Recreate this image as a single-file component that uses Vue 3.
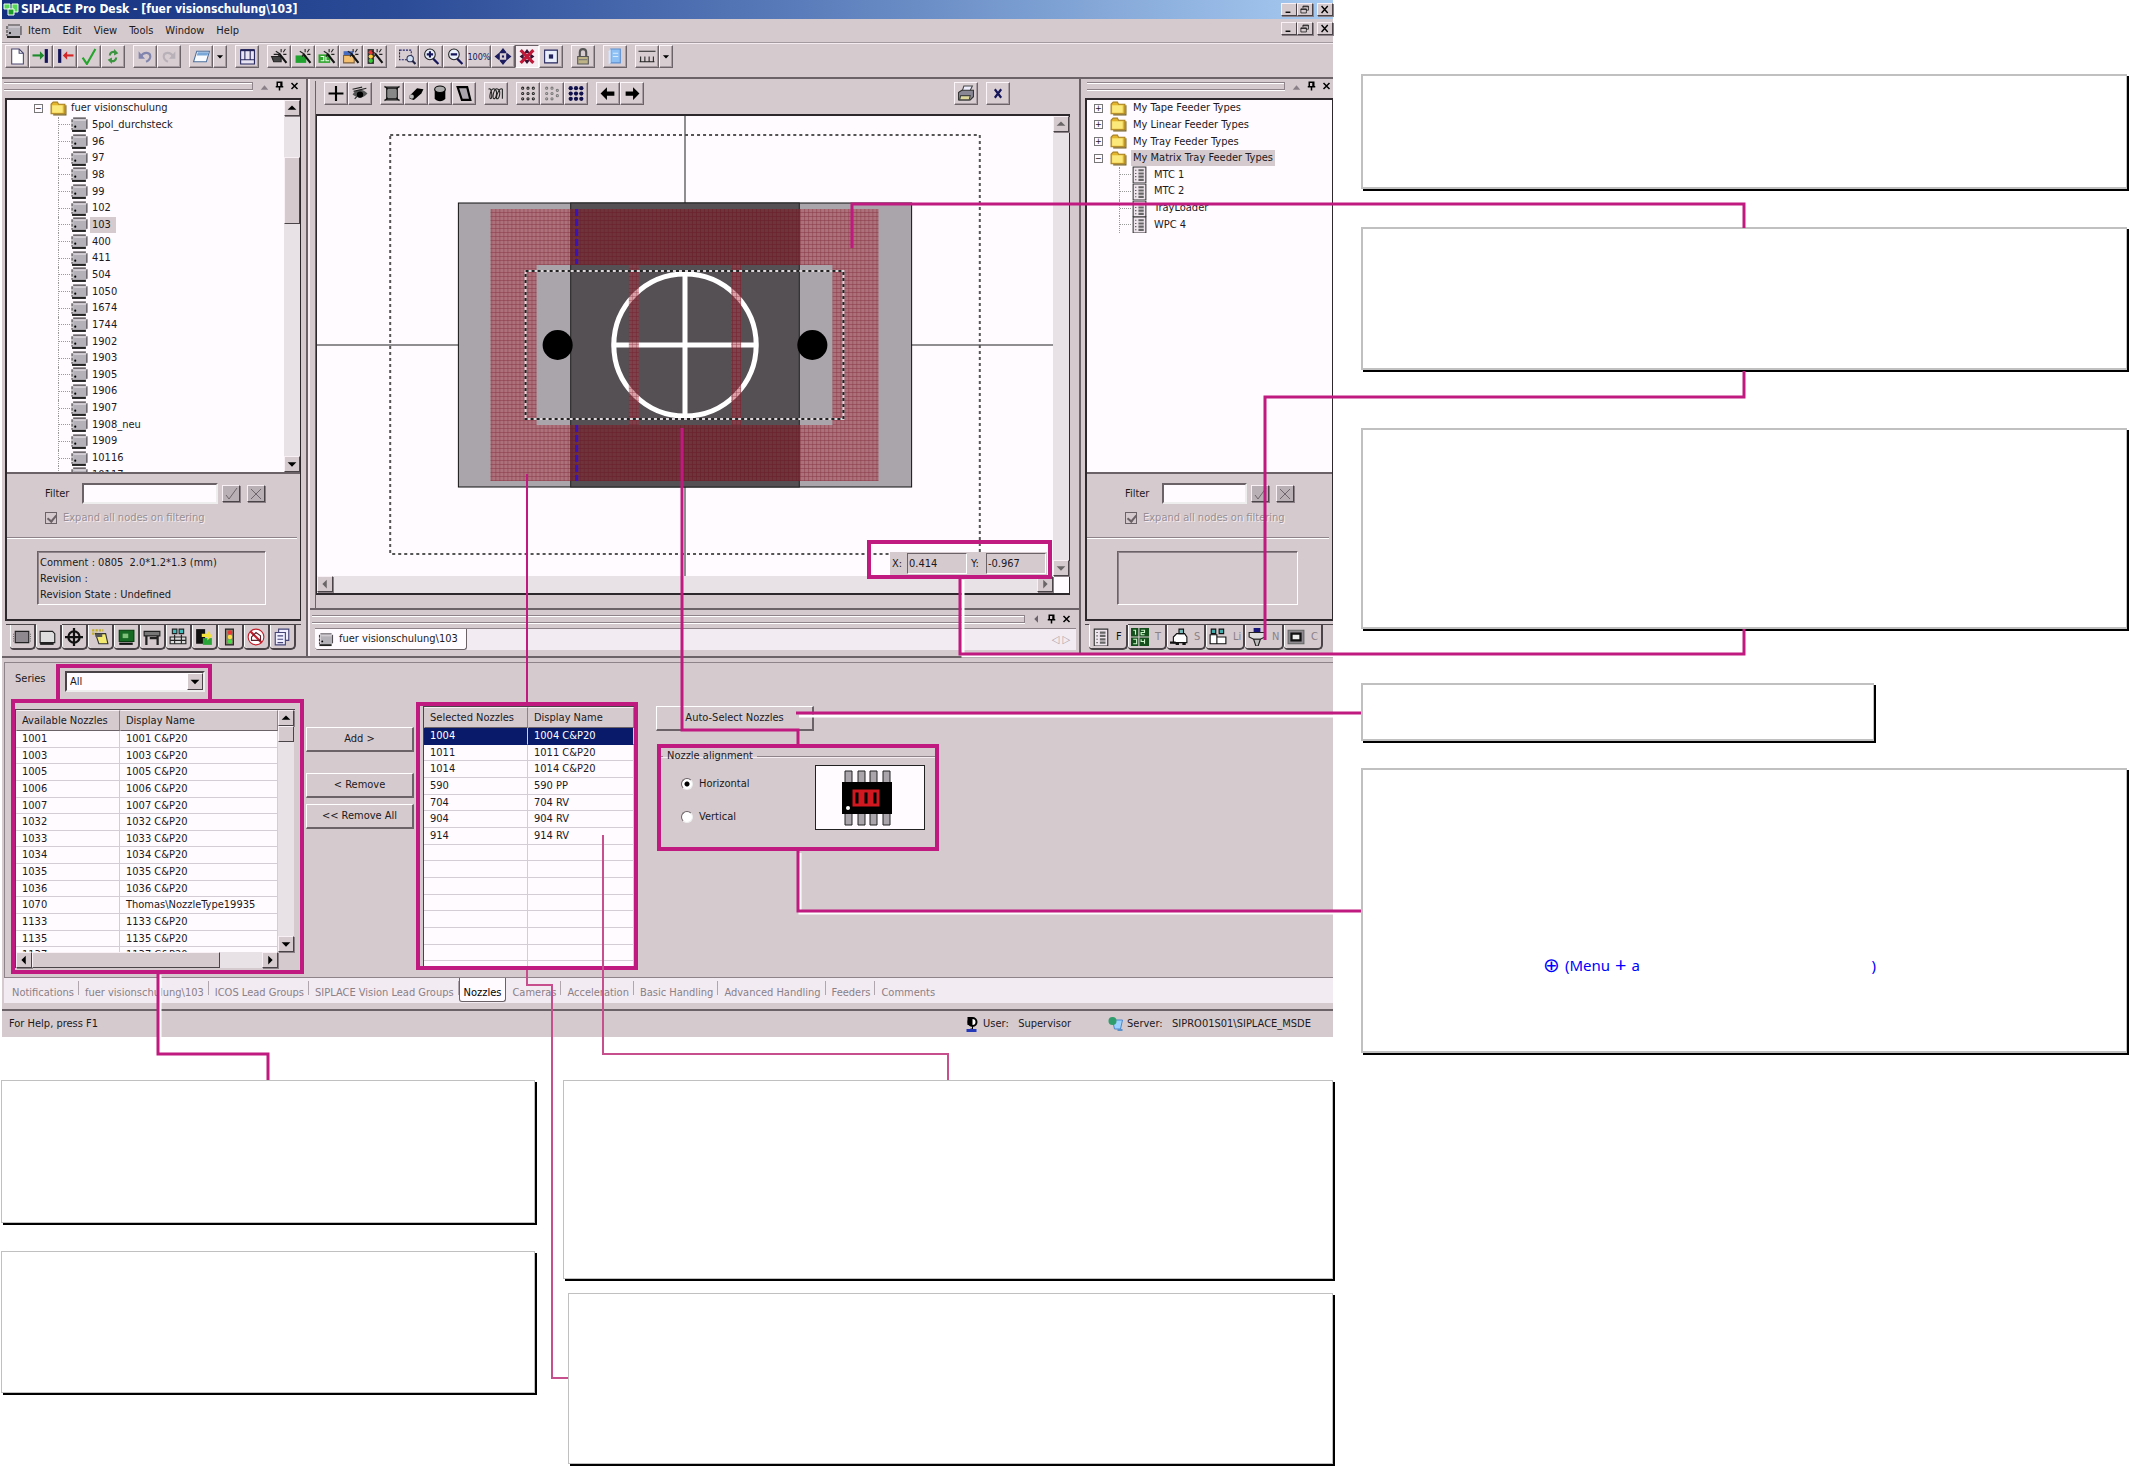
<script setup>
import { ref } from 'vue'

const chip = '<path d="M2 3h12l1 2v7l-1 1H2z" fill="#b5b1b8"/><path d="M2 2h12M15 3v9" stroke="#3c383d" fill="none"/><path d="M1 3v10" stroke="#222" stroke-dasharray="3 1" fill="none"/><path d="M1 14h13" stroke="#222" stroke-width="2"/><path d="M3 4h11" stroke="#ddd8de"/><circle cx="4" cy="10" r="1" fill="#000"/>'
const wand = '<path d="M8 5l7 9" stroke="#111" stroke-width="2"/><path d="M10 1v3M14 1l-2 3M5 3l3 2M15 6h-3M7 8l2-2" stroke="#222"/>'

const icons = {
  chip,
  folder: '<path d="M1 4l2-2h4l1 2h6v9H1z" fill="#e3b52c" stroke="#a8801c"/><path d="M2 5h10v7H2z" fill="#fbe97c"/><path d="M15 5v9H3" stroke="#77601c" fill="none"/>',
  sheet: '<path d="M2 1h12v15H2z" fill="#eee6ec" stroke="#333" stroke-width="1"/><path d="M4 4h1M4 7h1M4 10h1M4 13h1" stroke="#333"/><path d="M7 4h5M7 7h5M7 10h5M7 13h5" stroke="#666" stroke-width="2"/>',
  app: '<path d="M1 2h6v5H1zM9 2h6v8H9z" fill="#58d858" stroke="#eaffea"/><path d="M5 7h6v6H5z" fill="#1d9c2a" stroke="#fff"/>',
  page: '<path d="M3 1h7l4 4v10H3z" fill="#fff" stroke="#4a4770"/><path d="M10 1v4h4" fill="none" stroke="#4a4770"/>',
  into: '<path d="M0 7h8" stroke="#1d8a2c" stroke-width="2"/><path d="M7 3l4 4-4 4z" fill="#1d8a2c"/><path d="M13 1v13" stroke="#15155a" stroke-width="3"/>',
  outof: '<path d="M3 1v13" stroke="#15155a" stroke-width="3"/><path d="M9 7h7" stroke="#d42626" stroke-width="2"/><path d="M10 3L6 7l4 4z" fill="#d42626"/>',
  check: '<path d="M2 9l4 6L14 1" fill="none" stroke="#25a52c" stroke-width="2"/>',
  refresh: '<path d="M5 7c0-3 3-4 5-3M11 9c0 3-3 4-5 3" fill="none" stroke="#3c9440" stroke-width="2"/><path d="M9 1l4 4-4 2zM7 15l-4-4 4-2z" fill="#3c9440"/>',
  undo: '<path d="M4 8c3-5 9-4 9 0 0 3-2 4-4 5" fill="none" stroke="#8286ae" stroke-width="2"/><path d="M2 3v7h6z" fill="#8286ae"/>',
  redo: '<path d="M12 8C9 3 3 4 3 8c0 3 2 4 4 5" fill="none" stroke="#b9b1b8" stroke-width="2"/><path d="M14 3v7H8z" fill="#b9b1b8"/>',
  open: '<path d="M4 3h12l-3 10H1z" fill="#f8fbff" stroke="#4c6f9c"/><path d="M5 4h10l-1 3H4z" fill="#79a7d8"/>',
  layout: '<path d="M2 2h13v13H2zM2 11h13M6 2v9M11 2v9" fill="#e8e4f4" stroke="#25255c" stroke-width="1"/><path d="M2 2h13" stroke="#25255c" stroke-width="2"/>',
  w1: '<path d="M1 8h9v5H3zM3 6h6" fill="#444" stroke="#222"/>' + wand,
  w2: '<path d="M1 7h10v7H1z" fill="#1fa32e"/>' + wand,
  w3: '<path d="M0 6h11v8H0z" fill="#2fa52c"/><path d="M2 8h3v4H2M7 8v4h3" stroke="#efe" fill="none"/>' + wand,
  w4: '<path d="M1 3h9v4H1z" fill="#456bc0"/><path d="M1 7h10v7H1z" fill="#f4c070" stroke="#7d5f3a"/>' + wand,
  w5: '<path d="M1 1h6v14H1z" fill="#333"/><circle cx="4" cy="4" r="2" fill="#e33"/><circle cx="4" cy="8" r="2" fill="#fc3"/><circle cx="4" cy="12" r="2" fill="#3c3"/>' + wand,
  zoomsel: '<path d="M1 2h11v9H1z" fill="none" stroke="#222266" stroke-dasharray="2 1"/><circle cx="11" cy="10" r="3" fill="#cfe0f4" stroke="#335"/><path d="M13 12l3 3" stroke="#224" stroke-width="2"/>',
  zoomin: '<circle cx="7" cy="6" r="5" fill="#e9f0fa" stroke="#222" stroke-width="1"/><path d="M4 6h6M7 3v6M10 10l5 5" stroke="#15155a" stroke-width="2"/>',
  zoomout: '<circle cx="7" cy="6" r="5" fill="#e9f0fa" stroke="#222" stroke-width="1"/><path d="M4 6h6M10 10l5 5" stroke="#15155a" stroke-width="2"/>',
  move: '<path d="M8 0l4 5H4zM8 16l4-5H4zM0 8l5-4v8zM16 8l-5-4v8z" fill="#1c1c5e"/><path d="M7 7h2v2H7z" fill="#1c1c5e"/>',
  nomove: '<path d="M8 1l3 4H5zM8 15l3-4H5zM1 8l4-3v6zM15 8l-4-3v6zM6 6h4v4H6z" fill="#3a1030"/><path d="M2 2l12 12M14 2L2 14" stroke="#c01838" stroke-width="3"/>',
  fit: '<path d="M2 2h12v12H2z" fill="#e9eefa" stroke="#25255c" stroke-width="1"/><path d="M6 6h4v4H6z" fill="#25255c"/>',
  lock: '<path d="M5 8V4c0-4 6-4 6 0v4" fill="none" stroke="#555" stroke-width="2"/><path d="M3 8h10v7H3z" fill="#bdb386" stroke="#555"/><path d="M4 11h8" stroke="#777"/>',
  book: '<path d="M4 1h9v13H4z" fill="#8fc1f4" stroke="#5c8fd0"/><path d="M2 3l2-2v13l-2 1z" fill="#d5e8ff"/><path d="M6 5h5M6 8h5" stroke="#d7ebff"/>',
  ruler: '<path d="M0 3h16M1 13h14M2 13V8M6 13V8M10 13V8M14 13V8" stroke="#222" stroke-width="1"/>',
  plus: '<path d="M8 1v14M1 8h14" stroke="#000" stroke-width="2"/>',
  eye: '<path d="M1 9c3-6 10-6 14-1-4 5-9 5-14 1z" fill="#555"/><circle cx="8" cy="9" r="3" fill="#000"/><path d="M2 6l12-3M1 4l9-2M3 13l2-2" stroke="#222"/>',
  table: '<path d="M3 3h10v10H3z" fill="#888" stroke="#111" stroke-width="1"/><path d="M1 1l3 3M15 1l-3 3M1 15l3-3M15 15l-3-3M1 2h14M1 14h14" stroke="#111"/>',
  pencil: '<path d="M2 10l7-7 6 1-2 4-7 6-4-1z" fill="#000"/><circle cx="4" cy="11" r="2" fill="#bbb"/>',
  drum: '<path d="M3 4h10v9c-2 3-8 3-10 0z" fill="#000"/><ellipse cx="8" cy="4" rx="5" ry="3" fill="#aaa" stroke="#000"/>',
  plate: '<path d="M2 2h9l3 12H6z" fill="#aaa5ac" stroke="#000" stroke-width="2"/>',
  coil: '<path d="M1 4c3-3 4 9 2 9s0-12 4-9c3 2 1 9-1 9s0-12 4-9c3 2 1 9-1 9s2-12 5-9v9" fill="none" stroke="#222"/>',
  dots1: '<g fill="none" stroke="#222"><circle cx="3" cy="3" r="1"/><circle cx="8" cy="3" r="1"/><circle cx="13" cy="3" r="1"/><circle cx="3" cy="8" r="1"/><circle cx="8" cy="8" r="1"/><circle cx="13" cy="8" r="1"/><circle cx="3" cy="13" r="1"/><circle cx="8" cy="13" r="1"/><circle cx="13" cy="13" r="1"/></g>',
  dots2: '<g fill="none" stroke="#777"><circle cx="3" cy="3" r="1"/><circle cx="8" cy="3" r="1"/><circle cx="13" cy="5" r="1"/><circle cx="3" cy="8" r="1"/><circle cx="8" cy="8" r="1"/><circle cx="13" cy="10" r="1"/><circle cx="3" cy="13" r="1"/><circle cx="8" cy="13" r="1"/></g>',
  dots3: '<g fill="#10104c"><circle cx="3" cy="3" r="2"/><circle cx="8" cy="3" r="2"/><circle cx="13" cy="3" r="2"/><circle cx="3" cy="8" r="2"/><circle cx="8" cy="8" r="2"/><circle cx="13" cy="8" r="2"/><circle cx="3" cy="13" r="2"/><circle cx="8" cy="13" r="2"/><circle cx="13" cy="13" r="2"/></g>',
  left: '<path d="M1 8l6-6v4h7v4H7v4z" fill="#000"/>',
  right: '<path d="M15 8L9 2v4H2v4h7v4z" fill="#000"/>',
  printer: '<path d="M6 1h8l-3 6H4z" fill="#eef" stroke="#444"/><path d="M1 7l3-2h11v6l-3 3H1z" fill="#8a8795" stroke="#333"/><path d="M3 10h9l-1 4H2z" fill="#ddd89a" stroke="#444"/>',
  close: '<path d="M5 4l6 8M11 4L5 12" stroke="#15155a" stroke-width="2"/>',
  t1: '<path d="M2 3h12v10H2z" fill="#8d898f" stroke="#222"/><path d="M0 5v7M16 5v7" stroke="#222" stroke-dasharray="1 1"/>',
  t2: '<path d="M1 3h11l2 2v8H1z" fill="#ddd" stroke="#222" stroke-width="1"/><path d="M1 14h12" stroke="#222" stroke-width="2"/>',
  target: '<circle cx="8" cy="8" r="5" fill="none" stroke="#111" stroke-width="2"/><path d="M8 0v16M0 8h16" stroke="#111" stroke-width="2"/>',
  note: '<path d="M1 2h10M1 5h4" stroke="#c5b020" stroke-width="2" stroke-dasharray="2 1"/><path d="M4 5h9l2 9H7z" fill="#f4ea70" stroke="#333"/><path d="M4 5h6v3H4z" fill="#555"/>',
  board: '<path d="M2 2h13v10H2z" fill="#176a24" stroke="#063c0e"/><path d="M5 5h5v4H5z" fill="#7fc07a"/><path d="M2 14h12" stroke="#111" stroke-width="2"/>',
  bench: '<path d="M1 3h14v4H1z" fill="#777" stroke="#222"/><path d="M3 7v8M13 7v8M6 9h6" stroke="#222" stroke-width="2"/>',
  line: '<path d="M1 8h14v6H1z" fill="#ddd" stroke="#222"/><path d="M3 1h4v4H3zM9 1h4v4H9z" fill="#4bb" stroke="#222"/><path d="M1 11h14M5 6v8M11 6v8" stroke="#222"/>',
  export: '<path d="M1 1h8v13H1z" fill="#111"/><path d="M7 9h8v6H7z" fill="#28a338"/><path d="M6 5h5V2l4 5-4 4V8H6z" fill="#f4e23a"/>',
  light: '<path d="M4 1h7v14H4z" fill="#8c8470" stroke="#222"/><circle cx="8" cy="4" r="2" fill="#e33"/><circle cx="8" cy="8" r="2" fill="#fd4"/><circle cx="8" cy="12" r="2" fill="#4d4"/>',
  ban: '<circle cx="8" cy="8" r="7" fill="#fff" stroke="#c3202c" stroke-width="1"/><path d="M3 3l10 10" stroke="#c3202c" fill="none" stroke-width="2"/><path d="M4 11h8V7l-4-3-4 4z" stroke="#60202c" fill="none"/>',
  docs: '<path d="M5 1h9v10H5z" fill="#eef" stroke="#447"/><path d="M2 4h9v11H2z" fill="#eef" stroke="#447"/><path d="M4 7h5M4 10h5M4 13h5" stroke="#447"/>',
  grid: '<path d="M0 0h16v16H0z" fill="#14501c"/><path d="M2 2h2v4M9 2h3v2h-3v2h3M2 10h3v4H2M9 10v2h3v-2 4" stroke="#c9f5c9" fill="none"/><path d="M0 8h16M7 0v16" stroke="#d5cbce"/>',
  setup: '<path d="M3 8l3-3h7l2 3v5H3z" fill="#fff" stroke="#111"/><path d="M8 1h4v4H8z" fill="#7bb" stroke="#111"/><path d="M0 13h5M5 14h3M11 14h3" stroke="#111" stroke-width="2"/>',
  lines: '<path d="M1 6h6v8H1zM7 8h8v6H7z" fill="#fff" stroke="#111"/><path d="M2 1h4v4H2zM9 1h4v4H9z" fill="#4aa" stroke="#111"/>',
  nozzle: '<path d="M5 0h6v4H5z" fill="#16167c"/><path d="M1 4h14v4l-4 2H5L1 8z" fill="#ddd" stroke="#222"/><path d="M5 10h6l-2 6H7z" fill="#bbb" stroke="#222"/>',
  camera: '<path d="M1 2h14v12H1z" fill="#8d898f" stroke="#666"/><path d="M4 5h8v6H4z" fill="#eee" stroke="#111" stroke-width="2"/>',
  user: '<circle cx="9" cy="6" r="4" fill="#fff" stroke="#000" stroke-width="2"/><path d="M4 1h5v8H4z" fill="#000"/><path d="M9 9v4H7" stroke="#000" fill="none"/><path d="M3 13h10v3H3z" fill="#2438b8"/>',
  server: '<path d="M5 4h10l-2 9H7z" fill="#9bd2ff" stroke="#4e86c8"/><circle cx="5" cy="5" r="4" fill="#2f9d6c"/><path d="M10 14h5" stroke="#5b8fca" stroke-width="2"/>',
  min: '<path d="M3 12h7" stroke="#000" stroke-width="2"/>',
  restore: '<path d="M5 3h8v6h-3M5 3v3M5 4h8M2 7h8v6H2zM2 8h8" fill="none" stroke="#000"/>',
  x: '<path d="M3 3l9 10M12 3L3 13" stroke="#000" stroke-width="2"/>',
  tri: '<path d="M8 7l5 6H3z" fill="#8a8088"/>',
  tril: '<path d="M10 3v10L5 8z" fill="#6c646b"/>',
  pin: '<path d="M5 3h6v6H5zM3 9h10M8 9v5M10 3v6" fill="none" stroke="#000" stroke-width="2"/>',
  px: '<path d="M4 4l8 8M12 4l-8 8" stroke="#000" stroke-width="2"/>',
  up: '<path d="M8 5l5 5H3z" fill="#000"/>',
  down: '<path d="M8 11l5-5H3z" fill="#000"/>',
  lf: '<path d="M5 8l5-5v10z" fill="#000"/>',
  rt: '<path d="M11 8L6 3v10z" fill="#000"/>',
  tick: '<path d="M3 9l3 4 8-11" fill="none" stroke="#6d656b" stroke-width="1"/>',
  gx: '<path d="M3 3l10 10M13 3L3 13" stroke="#6d656b" stroke-width="1"/>'
}

const menu = ['Item', 'Edit', 'View', 'Tools', 'Window', 'Help']
const toolGroups = [
  ['page', 'into', 'outof', 'check', 'refresh'],
  ['undo', 'redo'],
  ['open', '>'],
  ['layout'],
  ['w1', 'w2', 'w3', 'w4', 'w5'],
  ['zoomsel', 'zoomin', 'zoomout', '100%', 'move', 'nomove', 'fit'],
  ['lock'],
  ['book'],
  ['ruler', '>']
]
const viewGroups = [
  ['plus', 'eye'],
  ['table', 'pencil', 'drum', 'plate'],
  ['coil'],
  ['dots1', 'dots2', 'dots3'],
  ['left', 'right']
]
const components = ['5pol_durchsteck', '96', '97', '98', '99', '102', '103', '400', '411', '504', '1050', '1674', '1744', '1902', '1903', '1905', '1906', '1907', '1908_neu', '1909', '10116', '10117']
const feederFolders = [
  { name: 'My Tape Feeder Types' },
  { name: 'My Linear Feeder Types' },
  { name: 'My Tray Feeder Types' },
  { name: 'My Matrix Tray Feeder Types', open: true }
]
const feeders = ['MTC 1', 'MTC 2', 'TrayLoader', 'WPC 4']
const leftTabs = ['t1', 't2', 'target', 'note', 'board', 'bench', 'line', 'export', 'light', 'ban', 'docs']
const rightTabs = [['sheet', 'F'], ['grid', 'T'], ['setup', 'S'], ['lines', 'Li'], ['nozzle', 'N'], ['camera', 'C']]
const available = [
  ...['1001', '1003', '1005', '1006', '1007', '1032', '1033', '1034', '1035', '1036'].map(n => [n, n + ' C&P20']),
  ['1070', 'Thomas\\NozzleType19935'],
  ...['1133', '1135', '1137'].map(n => [n, n + ' C&P20'])
]
const selected = [
  ['1004', '1004 C&P20'], ['1011', '1011 C&P20'], ['1014', '1014 C&P20'],
  ['590', '590 PP'], ['704', '704 RV'], ['904', '904 RV'], ['914', '914 RV'],
  ...Array.from({ length: 8 }, () => ['', ''])
]
const pages = ['Notifications', 'fuer visionschulung\\103', 'ICOS Lead Groups', 'SIPLACE Vision Lead Groups', 'Nozzles', 'Cameras', 'Acceleration', 'Basic Handling', 'Advanced Handling', 'Feeders', 'Comments']
const series = ref('All')
const alignment = ref('h')
</script>

<template>
  <main class="page">
    <section class="window">
      <header class="title">
        <svg class="ic" viewBox="0 0 16 16" v-html="icons.app" />
        <h1>SIPLACE Pro Desk - [fuer visionschulung\103]</h1>
        <div class="winbtns">
          <button v-for="b in ['min', 'restore', 'x']" :key="b" :aria-label="b"><svg viewBox="0 0 16 16" v-html="icons[b]" /></button>
        </div>
      </header>
      <nav class="menu">
        <svg class="ic" viewBox="0 0 16 16" v-html="icons.chip" />
        <a v-for="m in menu" :key="m" href="#">{{ m }}</a>
        <div class="winbtns">
          <button v-for="b in ['min', 'restore', 'x']" :key="b" :aria-label="b"><svg viewBox="0 0 16 16" v-html="icons[b]" /></button>
        </div>
      </nav>
      <div class="tools">
        <div v-for="(g, i) in toolGroups" :key="i" class="group">
          <button v-for="t in g" :key="t" class="tool" :class="{ drop: t === '>', down: t === 'nomove' }" :aria-label="t">
            <span v-if="t === '100%'" class="pct">100%</span>
            <svg v-else viewBox="0 0 16 16" v-html="t === '>' ? icons.down : icons[t]" />
          </button>
        </div>
      </div>

      <div class="body">
        <aside class="dock left">
          <div class="caption"><i class="grip" /><svg v-for="c in ['tri', 'pin', 'px']" :key="c" viewBox="0 0 16 16" v-html="icons[c]" /></div>
          <div class="frame">
            <div class="treebox">
              <ul class="tree comps">
                <li class="root"><span class="twist">−</span><svg viewBox="0 0 16 16" v-html="icons.folder" /><span class="label">fuer visionschulung</span></li>
                <li v-for="c in components" :key="c" class="leaf"><svg viewBox="0 0 16 16" v-html="icons.chip" /><span class="label" :class="{ sel: c === '103' }">{{ c }}</span></li>
              </ul>
              <div class="vscroll">
                <button aria-label="Scroll up"><svg viewBox="0 0 16 16" v-html="icons.up" /></button>
                <i class="thumb" />
                <button aria-label="Scroll down"><svg viewBox="0 0 16 16" v-html="icons.down" /></button>
              </div>
            </div>
            <div class="filter">
              <div class="frow">
                <label for="filter-l">Filter</label><input id="filter-l" type="text">
                <button aria-label="Apply"><svg viewBox="0 0 16 16" v-html="icons.tick" /></button>
                <button aria-label="Clear"><svg viewBox="0 0 16 16" v-html="icons.gx" /></button>
              </div>
              <label class="expand"><input type="checkbox" checked disabled>Expand all nodes on filtering</label>
            </div>
            <div class="info"><p>Comment : 0805&nbsp; 2.0*1.2*1.3 (mm)</p><p>Revision :</p><p>Revision State : Undefined</p></div>
          </div>
          <div class="tabs">
            <button v-for="(t, i) in leftTabs" :key="t" :class="{ on: i === 1 }" :aria-label="t"><svg viewBox="0 0 16 16" v-html="icons[t]" /></button>
          </div>
        </aside>

        <section class="center">
          <div class="view">
            <div class="viewtools">
              <div v-for="(g, i) in viewGroups" :key="i" class="group">
                <button v-for="t in g" :key="t" class="tool" :aria-label="t"><svg viewBox="0 0 16 16" v-html="icons[t]" /></button>
              </div>
              <div class="group end">
                <button class="tool" aria-label="Print"><svg viewBox="0 0 16 16" v-html="icons.printer" /></button>
              </div>
              <div class="group"><button class="tool" aria-label="Close"><svg viewBox="0 0 16 16" v-html="icons.close" /></button></div>
            </div>
            <div class="canvas">
              <div class="drawing">
                <svg viewBox="318 116 734 460" preserveAspectRatio="none">
                  <defs>
                    <pattern id="mesh" width="4" height="4" patternUnits="userSpaceOnUse">
                      <path d="M0 0h4v4H0z" fill="#b03040" fill-opacity=".45" /><path d="M0 0h4M0 0v4" stroke="#701020" stroke-opacity=".6" />
                    </pattern>
                  </defs>
                  <path d="M685 116V576M318 345H1052" stroke="#222" />
                  <path d="M391 135H979V554H391z" fill="none" stroke="#555" stroke-width="2" stroke-dasharray="3 3" />
                  <path d="M459 203H911V487H459z" fill="#a9a5ab" stroke="#111" />
                  <path d="M571 203H799V487H571z" fill="#545054" stroke="#222" />
                  <circle cx="558" cy="345" r="15" /><circle cx="812" cy="345" r="15" />
                  <circle cx="685" cy="345" r="71" fill="none" stroke="#fff" stroke-width="5" />
                  <path d="M685 272V418M612 345H758" stroke="#fff" stroke-width="5" />
                  <path d="M491 209H878V481H491zM537 265V425H832V265z" fill="url(#mesh)" fill-rule="evenodd" />
                  <path d="M629 265h10v160h-10zM731 265h10v160h-10z" fill="url(#mesh)" />
                  <path d="M571 209H799V265H571zM571 425H799V481H571z" fill="#501018" fill-opacity=".3" />
                  <path d="M577 209V264M577 425V481" stroke="#3a14b8" stroke-width="3" stroke-dasharray="7 3" />
                  <path d="M526 271H843V419H526z" fill="none" stroke="#ddd6da" stroke-width="2" />
                  <path d="M526 271H843V419H526z" fill="none" stroke="#222" stroke-width="2" stroke-dasharray="3 3" />
                </svg>
                <div class="coords">
                  <label for="cx">X:</label><input id="cx" value="0.414" readonly>
                  <label for="cy">Y:</label><input id="cy" value="-0.967" readonly>
                </div>
              </div>
              <div class="vscroll dim">
                <button aria-label="Scroll up"><svg viewBox="0 0 16 16" v-html="icons.up" /></button>
                <button aria-label="Scroll down"><svg viewBox="0 0 16 16" v-html="icons.down" /></button>
              </div>
              <div class="hscroll dim">
                <button aria-label="Scroll left"><svg viewBox="0 0 16 16" v-html="icons.lf" /></button>
                <button aria-label="Scroll right"><svg viewBox="0 0 16 16" v-html="icons.rt" /></button>
              </div>
            </div>
          </div>
          <div class="caption low"><i class="grip" /><svg v-for="c in ['tril', 'pin', 'px']" :key="c" viewBox="0 0 16 16" v-html="icons[c]" /></div>
          <div class="doctabs">
            <button><svg viewBox="0 0 16 16" v-html="icons.chip" />fuer visionschulung\103</button>
            <span>◁ ▷</span>
          </div>
        </section>

        <aside class="dock right">
          <div class="caption"><i class="grip" /><svg v-for="c in ['tri', 'pin', 'px']" :key="c" viewBox="0 0 16 16" v-html="icons[c]" /></div>
          <div class="frame">
            <div class="treebox">
              <ul class="tree feeds">
                <li v-for="f in feederFolders" :key="f.name" class="root"><span class="twist">{{ f.open ? '−' : '+' }}</span><svg viewBox="0 0 16 16" v-html="icons.folder" /><span class="label" :class="{ sel: f.open }">{{ f.name }}</span></li>
                <li v-for="f in feeders" :key="f" class="leaf"><svg viewBox="0 0 16 16" v-html="icons.sheet" /><span class="label">{{ f }}</span></li>
              </ul>
            </div>
            <div class="filter">
              <div class="frow">
                <label for="filter-r">Filter</label><input id="filter-r" type="text">
                <button aria-label="Apply"><svg viewBox="0 0 16 16" v-html="icons.tick" /></button>
                <button aria-label="Clear"><svg viewBox="0 0 16 16" v-html="icons.gx" /></button>
              </div>
              <label class="expand"><input type="checkbox" checked disabled>Expand all nodes on filtering</label>
            </div>
            <div class="info" />
          </div>
          <div class="tabs wide">
            <button v-for="(t, i) in rightTabs" :key="t[1]" :class="{ on: i === 0 }"><svg viewBox="0 0 16 16" v-html="icons[t[0]]" />{{ t[1] }}</button>
          </div>
        </aside>
      </div>

      <section class="nozzles">
        <div class="availcol">
          <div class="series">
            <label for="series">Series</label>
            <div class="combo">
              <select id="series" v-model="series"><option>All</option></select>
              <svg viewBox="0 0 16 16" v-html="icons.down" />
            </div>
          </div>
          <div class="list avail">
            <div class="clip">
              <table>
                <thead><tr><th>Available Nozzles</th><th>Display Name</th></tr></thead>
                <tbody><tr v-for="r in available" :key="r[0]"><td>{{ r[0] }}</td><td>{{ r[1] }}</td></tr></tbody>
              </table>
            </div>
            <div class="vscroll">
              <button aria-label="Scroll up"><svg viewBox="0 0 16 16" v-html="icons.up" /></button>
              <i class="thumb" />
              <button aria-label="Scroll down"><svg viewBox="0 0 16 16" v-html="icons.down" /></button>
            </div>
            <div class="hscroll">
              <button aria-label="Scroll left"><svg viewBox="0 0 16 16" v-html="icons.lf" /></button>
              <i class="thumb" />
              <button aria-label="Scroll right"><svg viewBox="0 0 16 16" v-html="icons.rt" /></button>
            </div>
          </div>
        </div>
        <div class="moves">
          <button class="push">Add &gt;</button>
          <button class="push">&lt; Remove</button>
          <button class="push">&lt;&lt; Remove All</button>
        </div>
        <div class="list chosen">
          <table>
            <thead><tr><th>Selected Nozzles</th><th>Display Name</th></tr></thead>
            <tbody><tr v-for="(r, i) in selected" :key="i" :class="{ sel: i === 0 }"><td>{{ r[0] }}</td><td>{{ r[1] }}</td></tr></tbody>
          </table>
        </div>
        <div class="align">
          <button class="push">Auto-Select Nozzles</button>
          <fieldset>
            <legend>Nozzle alignment</legend>
            <div class="radios">
              <label><input v-model="alignment" type="radio" name="al" value="h">Horizontal</label>
              <label><input v-model="alignment" type="radio" name="al" value="v">Vertical</label>
            </div>
            <svg class="pic" viewBox="0 0 108 63">
              <g fill="#a9a5ab" stroke="#222"><path v-for="x in [29, 42, 54, 67]" :key="x" :d="`M${x} 5h7v54h-7z`" /></g>
              <path d="M26 16h50v32H26z" />
              <path d="M38 25h6v14h-6zM47 25h6v14h-6zM56 25h6v14h-6z" fill="none" stroke="#d01820" stroke-width="3" />
              <circle cx="32" cy="42" r="2" fill="#fff" />
            </svg>
          </fieldset>
        </div>
      </section>
      <nav class="pages">
        <a v-for="p in pages" :key="p" href="#" :class="{ on: p === 'Nozzles' }">{{ p }}</a>
      </nav>
      <footer class="status">
        <span class="help">For Help, press F1</span>
        <span class="user"><svg viewBox="0 0 16 16" v-html="icons.user" />User:&nbsp;&nbsp; Supervisor</span>
        <span><svg viewBox="0 0 16 16" v-html="icons.server" />Server:&nbsp;&nbsp; SIPRO01S01\SIPLACE_MSDE</span>
      </footer>
    </section>

    <section class="side">
      <div class="note n1" /><div class="note n2" /><div class="note n3" /><div class="note n4" />
      <div class="note n5"><p><span class="sym">⊕</span><span>(Menu</span><span class="sym">+</span><span>a</span><span class="last">)</span></p></div>
    </section>
    <section class="below">
      <div><div class="note n6" /><div class="note n7" /></div>
      <div><div class="note n8" /><div class="note n9" /></div>
    </section>

    <svg class="callouts" viewBox="0 0 2130 1467" preserveAspectRatio="none" fill="none">
      <g stroke="#fff" stroke-width="3">
        <path d="M963 580V656H1333M799 716H1361M800 853V913H1361M160 975V1037" />
      </g>
      <g stroke="#c01a80" stroke-width="3">
        <path d="M852 248V204H1744V228M1744 371V397H1265V640M960 578V654H1744V629" />
        <path d="M796 713H1361M798 851V911H1361M682 428V730H798V745M158 974V1054H268V1080" />
      </g>
      <g stroke="#c01a80" stroke-width="4">
        <path d="M869 542H1050V577H869zM58 666H210V701H58zM13 701H302V972H13zM418 704H636V968H418zM659 746H937V849H659z" />
      </g>
      <g stroke="#c84f8e" stroke-width="2">
        <path d="M527 970V985H552V1378H568M603 835V1054H948V1080" />
        <path d="M527 474V703" stroke="#c01a80" />
      </g>
    </svg>
  </main>
</template>

<style>
body { background: #fff; }
</style>

<style scoped>
* { box-sizing: border-box; margin: 0; padding: 0; }
.page {
  position: relative;
  display: grid;
  grid-template-columns: 1333fr 797fr;
  font: 11px/16px "DejaVu Sans Condensed", "DejaVu Sans", sans-serif;
  color: #1c181c;
}
button, input, select { font: inherit; color: inherit; border-radius: 0; }
a { color: inherit; text-decoration: none; }
ul { list-style: none; }
svg { display: block; }
.window { margin-left: 2px; background: #d5cbce; min-width: 0; align-self: start; }
.title {
  display: flex; align-items: center; height: 19px; padding-left: 1px;
  background: linear-gradient(90deg, #14307e, #2c4c98 30%, #5a7cba 60%, #a6caf0);
  color: #fff;
}
.title h1 { font-size: 12px; line-height: 19px; margin-left: 2px; }
.ic { width: 16px; height: 16px; flex: none; }
.winbtns { display: flex; margin-left: auto; }
.winbtns button, .vscroll button, .hscroll button, .frow button {
  width: 16px; height: 16px; flex: none; background: #d5cbce;
  border: 1px solid; border-color: #f8f0f4 #4a4448 #4a4448 #f8f0f4; box-shadow: 1px 1px 0 #8a8086;
}
.winbtns button { height: 13px; }
.winbtns button:last-child { margin-left: 4px; }
.winbtns svg { width: 14px; height: 11px; }
.menu { display: flex; align-items: center; height: 24px; padding-left: 4px; border-bottom: 1px solid #a39a9f; }
.menu a { margin-right: 12px; }
.menu .ic { margin-right: 6px; }
.menu .winbtns { margin-bottom: 4px; }
.tools { display: flex; height: 34px; gap: 8px; padding: 1px 3px 0; border-top: 1px solid #f3ebef; }
.group { display: flex; }
.tool {
  display: flex; align-items: center; justify-content: center; width: 24px; height: 23px; background: #d8ced2;
  border: 1px solid; border-color: #fbf4f8 #6b6368 #6b6368 #fbf4f8; box-shadow: inset -1px -1px 0 #a69ca2;
}
.tool svg { width: 18px; height: 17px; }
.tool.drop { width: 14px; }
.tool.drop svg { width: 10px; }
.tool.down { background: #f5edf1; border-color: #6b6368 #fff #fff #6b6368; box-shadow: none; }
.pct { font-size: 9px; color: #15155a; margin: 0 -4px; }

.body { display: grid; grid-template-columns: 306px 1fr 254px; height: 581px; border-top: 2px solid #6b6267; border-bottom: 2px solid #6b6267; }
.dock { min-width: 0; }
.dock.left { border-right: 2px solid #6b6267; padding-right: 5px; }
.dock.right { border-left: 2px solid #6b6267; padding-left: 4px; }
.caption { display: flex; align-items: center; height: 14px; margin-bottom: 5px; padding-left: 2px; }
.caption svg { width: 13px; height: 12px; margin-left: 2px; }
.grip { flex: 1; height: 8px; border: solid #8d8389; border-width: 1px 1px 1px 0; box-shadow: inset 0 1px 0 #fff, 0 1px 0 #fff; margin-right: 3px; }
.frame { border: solid #2c282c; border-width: 2px 1px 2px 2px; margin-left: 3px; height: 523px; }
.right .frame { margin-left: 0; }
.treebox { display: flex; height: 374px; overflow: hidden; background: #fffbff; border-bottom: 2px solid #6b6267; }
.tree { flex: 1; display: flex; flex-direction: column; position: relative; }
.tree li { flex: 1; display: flex; align-items: center; min-height: 0; }
.tree svg { width: 17px; height: 17px; margin-right: 2px; flex: none; }
.comps { height: 383px; }
.feeds { height: 133px; flex: 1; }
.comps .root { padding-left: 27px; }
.comps .leaf { margin-left: 51px; border-left: 1px dotted #999; padding-left: 12px; }
.comps .leaf::before { content: ""; width: 11px; margin-left: -12px; margin-right: 1px; border-top: 1px dotted #999; }
.feeds .root { padding-left: 7px; }
.feeds .leaf { margin-left: 32px; border-left: 1px dotted #999; }
.feeds .leaf::before { content: ""; width: 11px; border-top: 1px dotted #999; }
.feeds svg { margin-right: 4px; }
.twist { width: 9px; height: 9px; font-size: 9px; line-height: 7px; text-align: center; border: 1px solid #777; margin-right: 7px; }
.label { line-height: 16px; padding: 0 2px; white-space: nowrap; }
.label.sel { background: #d5cbce; }
.leaf .label.sel { padding-right: 5px; }
.vscroll { display: flex; flex-direction: column; width: 16px; background: #e8e2e7; }
.vscroll button:last-child, .hscroll button:last-child { margin-top: auto; }
.hscroll button:last-child { margin-top: 0; margin-left: auto; }
.vscroll svg, .hscroll svg { width: 14px; height: 14px; }
.dim svg { opacity: .5; }
.thumb { background: #d5cbce; border: 1px solid; border-color: #f8f0f4 #4a4448 #4a4448 #f8f0f4; }
.left .thumb { height: 67px; margin-top: 41px; }
.filter { height: 64px; padding: 9px 0 0 38px; margin-right: 3px; border-bottom: 1px solid #8d8389; box-shadow: 0 1px 0 #fff; }
.frow { display: flex; align-items: center; height: 21px; }
.frow label { width: 37px; }
.frow input { width: 136px; height: 21px; border: 2px solid; border-color: #6b6267 #eee #eee #6b6267; background: #fffbff; margin-right: 4px; }
.right .frow input { width: 85px; }
.frow button { width: 18px; height: 17px; margin-right: 7px; background: #b9b0b5; }
.expand { display: flex; align-items: center; height: 16px; margin-top: 6px; color: #978e94; text-shadow: 1px 1px 0 #f5edf1; white-space: nowrap; }
.expand input, .radios input { appearance: none; width: 12px; height: 12px; border: 1px solid #6b6267; margin-right: 6px; }
.expand input::before { content: ""; display: block; width: 4px; height: 7px; margin: 0 0 0 3px; border: solid #6b6267; border-width: 0 2px 2px 0; transform: rotate(40deg); }
.info { margin: 13px 34px 0 30px; height: 54px; border: 1px solid; border-color: #6b6267 #fff #fff #6b6267; box-shadow: inset 1px 1px 0 #8d8389; padding: 3px 2px; }
.tabs { display: flex; margin: 3px 0 0 4px; border-top: 1px solid #4a4448; padding-left: 4px; }
.tabs button {
  width: 26px; height: 25px; display: flex; align-items: center; padding-left: 3px; background: #d5cbce;
  border: solid #4a4448; border-width: 0 2px 2px 0; border-radius: 0 0 5px 4px; box-shadow: inset 1px 0 0 #fff; color: #8a8086;
}
.tabs svg { width: 18px; height: 18px; flex: none; }
.tabs .on { color: #111; box-shadow: inset 1px 0 0 #fff, 0 -1px 0 #d5cbce; }
.tabs.wide { margin-left: 0; padding-left: 4px; }
.tabs.wide button { width: 39px; gap: 6px; }

.center { min-width: 0; border-left: 2px solid #f5edf1; padding: 2px 3px 0 5px; background: #d5cbce; }
.view { height: 527px; margin-right: 6px; border-left: 1px solid #6b6267; }
.viewtools { display: flex; height: 33px; gap: 8px; padding: 1px 60px 0 8px; }
.end { margin-left: auto; }
.canvas { display: grid; grid-template-columns: 1fr 16px; grid-template-rows: 460px 17px; border: solid #2c282c; border-width: 2px 1px 2px 1px; background: #fffbff; }
.drawing { position: relative; background: #fffbff; min-width: 0; }
.drawing > svg { width: 100%; height: 100%; }
.coords { position: absolute; right: 6px; bottom: 1px; height: 23px; display: flex; align-items: center; background: #d5cbce; padding-left: 2px; }
.coords label { width: 15px; }
.coords input { width: 60px; height: 21px; background: #d5cbce; border: 1px solid; border-color: #6b6267 #fff #fff #6b6267; margin-right: 4px; padding-left: 1px; }
.coords input:last-child { margin-right: 1px; }
.hscroll { display: flex; background: #e8e2e7; }
.caption.low { margin: 0 -3px 0 -5px; padding: 0 6px 0 2px; border-top: 2px solid #6b6267; height: 20px; }
.doctabs { display: flex; align-items: flex-start; justify-content: space-between; height: 22px; background: #f3ebf2; border-top: 1px solid #8d8389; }
.doctabs button { display: flex; align-items: center; gap: 5px; width: 152px; height: 21px; padding-left: 3px; background: #fffbff; border: solid #6b6267; border-width: 0 1px 1px 0; border-radius: 0 0 3px 3px; white-space: nowrap; }
.doctabs svg { width: 16px; height: 15px; }
.doctabs span { color: #a89ea5; padding-right: 6px; line-height: 22px; }

.nozzles { display: flex; height: 316px; border: solid #8d8389; border-width: 1px 0 1px 1px; margin: 4px 0 0 2px; padding: 2px 0 0 10px; background: #d5cbce; }
.series { display: flex; height: 44px; padding-top: 6px; }
.series label { width: 50px; }
.combo { display: flex; position: relative; width: 140px; height: 21px; }
.combo select { appearance: none; width: 100%; background: #fffbff; border: 2px solid; border-color: #4a4448 #eee #eee #4a4448; padding-left: 3px; }
.combo svg { position: absolute; right: 2px; top: 2px; width: 16px; height: 17px; background: #d5cbce; border: 1px solid; border-color: #fff #4a4448 #4a4448 #fff; }
.list { border: solid #4a4448; border-width: 1px 0 0 1px; background: #fffbff; }
table { display: block; width: 100%; }
thead, tbody { display: flex; flex-direction: column; }
tr { display: grid; grid-template-columns: 104px 1fr; flex: 1; min-height: 0; align-items: stretch; }
th { text-align: left; font-weight: normal; background: #d5cbce; border: 1px solid; border-color: #f8f0f4 #8d8389 #6b6267 #d5cbce; padding: 2px 0 0 5px; white-space: nowrap; height: 21px; line-height: 16px; }
td { border: solid #d5cdd5; border-width: 0 1px 1px 0; padding-left: 6px; line-height: 16px; white-space: nowrap; overflow: hidden; min-width: 0; }
.avail { display: grid; grid-template-columns: 262px 17px; grid-template-rows: 242px 16px; background: #d5cbce; }
.clip { overflow: hidden; background: #fffbff; }
.avail tbody { height: 233px; }
.avail .vscroll .thumb { height: 16px; }
.avail .hscroll .thumb { width: 188px; }
.moves { display: flex; flex-direction: column; margin: 62px 0 0 11px; }
.push { height: 25px; background: #d5cbce; border: solid; border-width: 1px 2px 2px 1px; border-color: #fff #6b6267 #6b6267 #fff; }
.moves .push { width: 108px; margin-bottom: 6px; }
.moves .push:first-child { margin-bottom: 21px; }
.chosen { margin: 41px 0 0 9px; width: 211px; height: 262px; overflow: hidden; }
.chosen tbody { height: 250px; }
.chosen .sel td { background: #0a1a6b; color: #fff; border-bottom-color: #0a1a6b; }
.align { margin: 41px 0 0 22px; width: 283px; }
.align .push { width: 158px; }
fieldset { display: flex; border: 1px solid #8d8389; box-shadow: inset 1px 1px 0 #f5edf1; margin: 17px 3px 0 2px; height: 100px; }
legend { margin-left: 4px; padding: 0 4px; }
.radios { width: 134px; padding: 3px 0 0 22px; }
.radios label { display: flex; align-items: center; height: 33px; }
.radios input { border-radius: 50%; background: #fff; border-color: #6b6267 #eee #eee #6b6267; }
.radios input:checked { background: radial-gradient(circle, #000 2px, #fff 3px); }
.pic { width: 110px; height: 65px; background: #fffbff; border: 1px solid #222; margin: 1px 0 0 22px; }
.pages { display: flex; height: 25px; margin: 0 0 0 2px; padding-left: 2px; background: #f3ebf2; color: #8a8087; white-space: nowrap; }
.pages a { padding: 7px 5px 0 6px; height: 24px; line-height: 16px; background: linear-gradient(#b0a6ad, #b0a6ad) right 3px / 1px 14px no-repeat; }
.pages .on { background: #fffbff; color: #000; border: solid #6b6267; border-width: 0 1px 1px; border-radius: 0 0 3px 3px; padding: 7px 4px 0; }
.pages a:last-child { background: none; }
.status { display: flex; align-items: center; height: 28px; margin-top: 6px; padding: 0 22px 0 7px; border-top: 2px solid #6b6267; }
.status span { display: flex; align-items: center; gap: 3px; }
.status svg { width: 17px; height: 16px; }
.help { flex: 1; }
.user { margin-right: 36px; }

.note { border: 2px solid #c0c0c0; border-right-width: 1px; box-shadow: 2px 2px 0 #000; background: #fff; }
.side { padding: 74px 3px 0 28px; }
.n1 { height: 115px; }
.n2 { height: 143px; margin-top: 38px; }
.n3 { height: 201px; margin-top: 58px; }
.n4 { height: 58px; margin-top: 54px; width: 67%; }
.n5 { height: 285px; margin-top: 27px; padding-top: 184px; }
.n5 p { display: flex; align-items: center; gap: 5px; width: 513px; padding-left: 180px; font: 15px/22px "Noto Sans", sans-serif; color: #00f; }
.sym { font-size: 20px; }
.last { margin-left: auto; }
.below { grid-column: 1; display: grid; grid-template-columns: 534px 1fr; gap: 28px; padding: 27px 0 3px 1px; }
.below .note { border-width: 1px; }
.n6 { height: 143px; }
.n7 { height: 142px; margin-top: 28px; }
.n8 { height: 199px; }
.n9 { height: 171px; margin: 14px 0 0 5px; }
.callouts { position: absolute; inset: 0; width: 100%; height: 1467px; pointer-events: none; }
</style>
